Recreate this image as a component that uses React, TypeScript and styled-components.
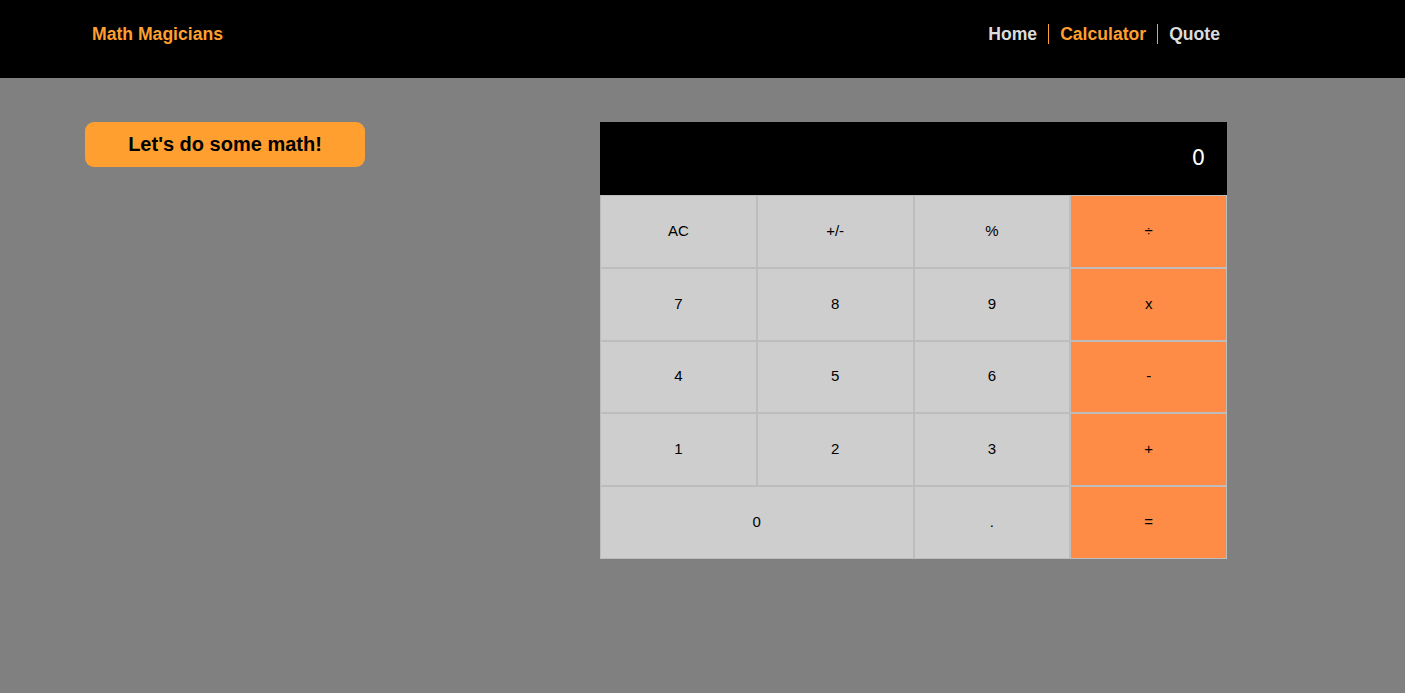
import React from "react";
import styled, { createGlobalStyle } from "styled-components";

const GlobalStyle = createGlobalStyle`
  html, body {
    margin: 0;
    padding: 0;
    background: #808080;
    font-family: "Liberation Sans", Arial, sans-serif;
  }
`;

const keys: { label: string; op?: boolean; wide?: boolean }[] = [
  { label: "AC" },
  { label: "+/-" },
  { label: "%" },
  { label: "÷", op: true },
  { label: "7" },
  { label: "8" },
  { label: "9" },
  { label: "x", op: true },
  { label: "4" },
  { label: "5" },
  { label: "6" },
  { label: "-", op: true },
  { label: "1" },
  { label: "2" },
  { label: "3" },
  { label: "+", op: true },
  { label: "0", wide: true },
  { label: "." },
  { label: "=", op: true },
];

const navLinks = [
  { label: "Home", active: false },
  { label: "Calculator", active: true },
  { label: "Quote", active: false },
];

const App: React.FC = () => {
  return (
    <>
      <GlobalStyle />
      <Header>
        <Logo>Math Magicians</Logo>
        <Nav>
          {navLinks.map((link, i) => (
            <React.Fragment key={link.label}>
              {i > 0 && <Divider />}
              <NavLink active={link.active}>{link.label}</NavLink>
            </React.Fragment>
          ))}
        </Nav>
      </Header>
      <Main>
        <Intro>Let's do some math!</Intro>
        <Calculator>
          <Display>0</Display>
          <Keypad>
            {keys.map((k) => (
              <Key key={k.label} op={k.op} wide={k.wide}>
                {k.label}
              </Key>
            ))}
          </Keypad>
        </Calculator>
      </Main>
    </>
  );
};

export default App;

const Header = styled.header`
  height: 78px;
  background: #000;
  display: flex;
  justify-content: space-between;
  align-items: flex-start;
  padding: 23px 185px 0 92px;
  box-sizing: border-box;
`;

const Logo = styled.h1`
  margin: 0;
  font-size: 17.6px;
  font-weight: 700;
  color: #ff9f2f;
  line-height: 22px;
`;

const Nav = styled.nav`
  display: flex;
  align-items: center;
`;

const Divider = styled.span`
  width: 1px;
  height: 20px;
  background: #ff9f2f;
`;

const NavLink = styled.a<{ active: boolean }>`
  padding: 0 11px;
  font-size: 17.6px;
  font-weight: 700;
  line-height: 22px;
  color: ${(p) => (p.active ? "#ff9f2f" : "#dcdcdc")};
  cursor: pointer;

  &:last-child {
    padding-right: 0;
  }
`;

const Main = styled.main`
  display: flex;
  align-items: flex-start;
  padding: 44px 0 0 85px;
  gap: 235px;
`;

const Intro = styled.h2`
  margin: 0;
  width: 280px;
  height: 45px;
  border-radius: 9px;
  background: #ff9f2f;
  color: #000;
  font-size: 20px;
  font-weight: 700;
  display: flex;
  align-items: center;
  justify-content: center;
`;

const Calculator = styled.div`
  width: 627px;
`;

const Display = styled.div`
  height: 73px;
  background: #000;
  color: #fff;
  font-family: "DejaVu Sans", sans-serif;
  font-size: 21px;
  display: flex;
  align-items: center;
  justify-content: flex-end;
  padding: 0 22px 2px 0;
  box-sizing: border-box;
`;

const Keypad = styled.div`
  display: grid;
  grid-template-columns: repeat(4, 1fr);
  grid-template-rows: repeat(5, 1fr);
  height: 364px;
`;

const Key = styled.button<{ op?: boolean; wide?: boolean }>`
  grid-column: ${(p) => (p.wide ? "span 2" : "span 1")};
  border: 1px solid #bdbdbd;
  margin: 0;
  padding: 0 0 2px;
  background: ${(p) => (p.op ? "#ff8c46" : "#cecece")};
  color: #000;
  font-family: "Liberation Sans", Arial, sans-serif;
  font-size: 15px;
  cursor: pointer;
`;
